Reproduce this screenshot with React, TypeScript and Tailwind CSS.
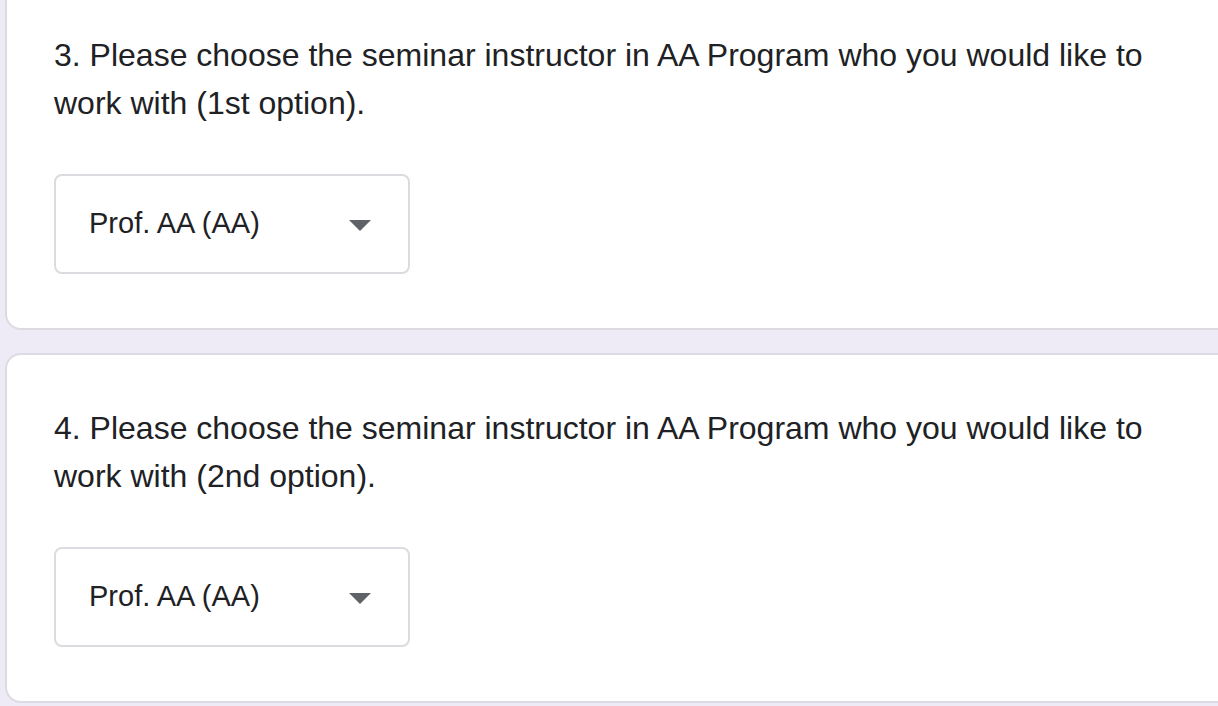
import React from 'react';

const questions = [
  { n: 3, label: '1st option', value: 'Prof. AA (AA)' },
  { n: 4, label: '2nd option', value: 'Prof. AA (AA)' },
];

function Select({ value }: { value: string }) {
  return (
    <div className="flex h-[100px] w-[356px] items-center justify-between rounded-[8px] border-2 border-[#dadce0] pl-[33px] pr-[37px]">
      <span className="text-[29px] text-[#202124]">{value}</span>
      <svg width="22" height="11" viewBox="0 0 22 11" className="mt-[2px]">
        <path d="M0 0h22L11 11z" fill="#5f6368" />
      </svg>
    </div>
  );
}

export default function App() {
  return (
    <div
      className="min-h-screen overflow-hidden bg-[#eeebf6] pl-[5px]"
      style={{ fontFamily: '"Liberation Sans", Arial, sans-serif' }}
    >
      <div className="-mt-[20px] flex w-[1240px] flex-col gap-[23px]">
        {questions.map((q) => (
          <section
            key={q.n}
            className="rounded-[16px] border-2 border-[#dcdbe1] bg-white pb-[54px] pl-[47px] pt-[49px]"
          >
            <h2 className="w-[1110px] text-[32px] leading-[48px] text-[#202124]">
              {q.n}. Please choose the seminar instructor in AA Program who you would like to work with ({q.label}).
            </h2>
            <div className="mt-[47px]">
              <Select value={q.value} />
            </div>
          </section>
        ))}
      </div>
    </div>
  );
}
